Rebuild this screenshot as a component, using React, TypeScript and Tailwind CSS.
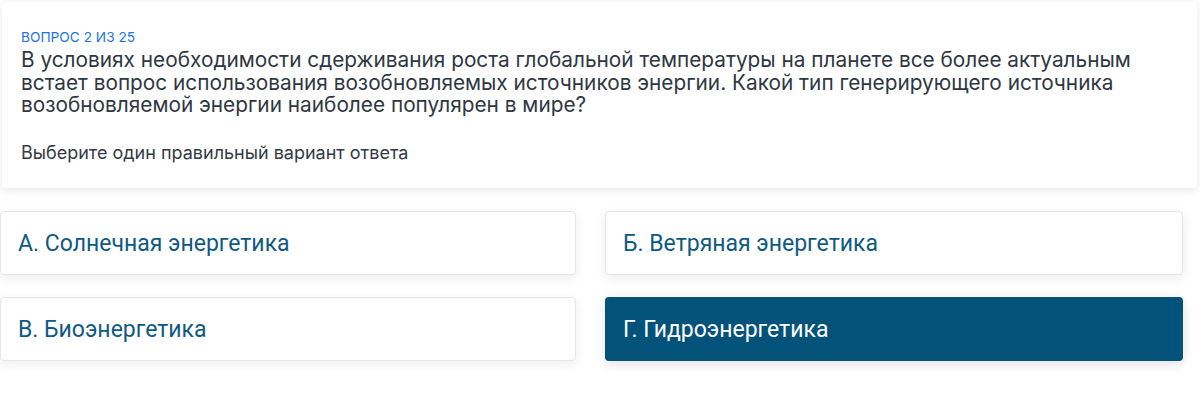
import React from "react";

const options = [
  { label: "А. Солнечная энергетика", active: false },
  { label: "Б. Ветряная энергетика", active: false },
  { label: "В. Биоэнергетика", active: false },
  { label: "Г. Гидроэнергетика", active: true },
];

export default function App() {
  return (
    <div className="w-[1200px] h-[400px] overflow-hidden bg-white font-[family-name:Inter,sans-serif]">
      {/* question card */}
      <div className="ml-[2px] mr-[3px] mt-[2px] h-[186px] rounded bg-white px-[19px] pt-[27px] shadow-[0_2px_10px_rgba(0,0,0,0.10)]">
        <div className="text-[13.7px] leading-[16px] text-[#1a73e8]">ВОПРОС 2 ИЗ 25</div>
        <p className="mt-[4px] text-[20.8px] leading-[22.5px] text-[#2f3742]">
          В условиях необходимости сдерживания роста глобальной температуры на планете все более актуальным
          <br />
          встает вопрос использования возобновляемых источников энергии. Какой тип генерирующего источника
          <br />
          возобновляемой энергии наиболее популярен в мире?
        </p>
        <p className="mt-[26px] text-[18px] leading-[20px] text-[#333a44]">Выберите один правильный вариант ответа</p>
      </div>

      {/* answers */}
      <div className="mt-[23px] grid w-[1183px] grid-cols-[576px_578px] gap-x-[29px] gap-y-[22px]">
        {options.map((o) => (
          <div
            key={o.label}
            className={
              o.active
                ? "flex h-[64px] items-center rounded bg-[#03527a] px-[18px] pt-[2px] font-[family-name:Roboto,sans-serif] text-[23px] text-white shadow-[0_3px_12px_rgba(0,0,0,0.12)]"
                : "flex h-[64px] items-center rounded border border-[#e6e6e6] bg-white px-[17px] pt-[2px] font-[family-name:Roboto,sans-serif] text-[23px] text-[#0f5a82] shadow-[0_3px_12px_rgba(0,0,0,0.08)]"
            }
          >
            {o.label}
          </div>
        ))}
      </div>
    </div>
  );
}
